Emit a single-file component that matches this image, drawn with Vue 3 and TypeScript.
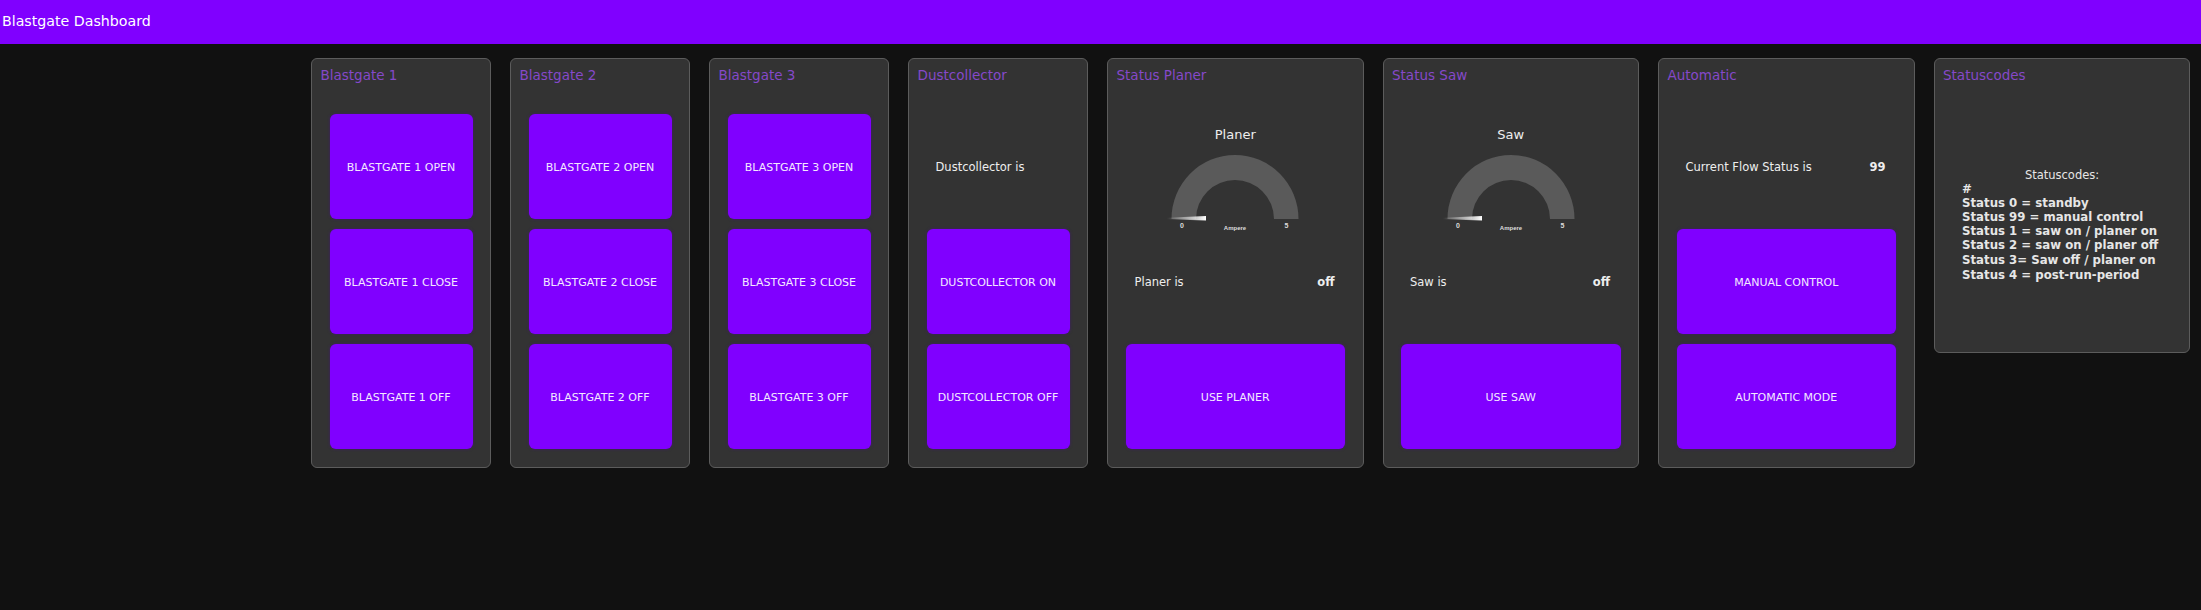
<script setup lang="ts">
interface Row { kind: 'button' | 'text' | 'gauge' | 'empty'; label?: string; value?: string }
interface Card { title: string; wide: boolean; rows: Row[] }

const b = (label: string): Row => ({ kind: 'button', label })
const t = (label: string, value = ''): Row => ({ kind: 'text', label, value })

const cards: Card[] = [
  { title: 'Blastgate 1', wide: false, rows: [b('BLASTGATE 1 OPEN'), b('BLASTGATE 1 CLOSE'), b('BLASTGATE 1 OFF')] },
  { title: 'Blastgate 2', wide: false, rows: [b('BLASTGATE 2 OPEN'), b('BLASTGATE 2 CLOSE'), b('BLASTGATE 2 OFF')] },
  { title: 'Blastgate 3', wide: false, rows: [b('BLASTGATE 3 OPEN'), b('BLASTGATE 3 CLOSE'), b('BLASTGATE 3 OFF')] },
  { title: 'Dustcollector', wide: false, rows: [t('Dustcollector is'), b('DUSTCOLLECTOR ON'), b('DUSTCOLLECTOR OFF')] },
  { title: 'Status Planer', wide: true, rows: [{ kind: 'gauge', label: 'Planer' }, t('Planer is', 'off'), b('USE PLANER')] },
  { title: 'Status Saw', wide: true, rows: [{ kind: 'gauge', label: 'Saw' }, t('Saw is', 'off'), b('USE SAW')] },
  { title: 'Automatic', wide: true, rows: [t('Current Flow Status is', '99'), b('MANUAL CONTROL'), b('AUTOMATIC MODE')] },
]

const codes = [
  '#',
  'Status 0 = standby',
  'Status 99 = manual control',
  'Status 1 = saw on / planer on',
  'Status 2 = saw on / planer off',
  'Status 3= Saw off / planer on',
  'Status 4 = post-run-period',
]
</script>

<template>
  <div class="page">
    <header class="bar">Blastgate Dashboard</header>
    <main class="board">
      <section v-for="card in cards" :key="card.title" class="card" :class="{ wide: card.wide }">
        <h2 class="title">{{ card.title }}</h2>
        <div class="rows">
          <template v-for="(row, i) in card.rows" :key="i">
            <button v-if="row.kind === 'button'" class="btn" type="button">{{ row.label }}</button>
            <div v-else-if="row.kind === 'text'" class="line">
              <span>{{ row.label }}</span>
              <strong>{{ row.value }}</strong>
            </div>
            <div v-else class="gauge">
              <div class="gauge-name">{{ row.label }}</div>
              <svg class="gauge-svg" width="140" height="80" viewBox="0 0 140 80">
                <defs>
                  <linearGradient :id="'needle' + card.title.length" x1="0" x2="1" y1="0" y2="0">
                    <stop offset="0" stop-color="#fff" stop-opacity="0" />
                    <stop offset="1" stop-color="#fff" />
                  </linearGradient>
                </defs>
                <path d="M6.5 65 A63.5 64 0 0 1 133.5 65 L109 65 A39 39 0 0 0 31 65 Z" fill="#5a5a5a" />
                <path d="M2 63.8 L41 62 L41 66.5 L2 65.2 Z" :fill="'url(#needle' + card.title.length + ')'" />
                <text x="17" y="74" class="tick">0</text>
                <text x="70" y="75.500" class="tick unit">Ampere</text>
                <text x="121.500" y="74" class="tick">5</text>
              </svg>
            </div>
          </template>
        </div>
      </section>
      <section class="card wide codes">
        <h2 class="title">Statuscodes</h2>
        <div class="codes-body">
          <div class="codes-head">Statuscodes:</div>
          <div v-for="code in codes" :key="code" class="code">{{ code }}</div>
        </div>
      </section>
    </main>
  </div>
</template>

<style>
html, body { margin: 0; background: #111; }
</style>

<style scoped>
.page {
  width: 2201px;
  height: 610px;
  background: #111;
  color: #eee;
  font-family: "DejaVu Sans", Verdana, sans-serif;
  overflow: hidden;
}
.bar {
  height: 44px;
  line-height: 43px;
  padding-left: 2px;
  background: #8000ff;
  color: #fff;
  font-size: 14.2px;
}
.board {
  display: flex;
  align-items: flex-start;
  gap: 19px;
  padding: 14px 0 0 311px;
}
.card {
  box-sizing: border-box;
  width: 180px;
  height: 410px;
  flex: none;
  background: #333;
  border: 1px solid #5c5c5c;
  border-radius: 6px;
}
.card.wide { width: 256.5px; }
.card.codes { height: 295px; }
.title {
  height: 55px;
  margin: 0;
  padding: 7.5px 0 0 8.5px;
  box-sizing: border-box;
  font-size: 13.5px;
  line-height: 16px;
  font-weight: 400;
  color: #8549c9;
}
.rows {
  display: grid;
  grid-template-rows: repeat(3, 105px);
  row-gap: 10px;
  padding: 0 17.5px;
}
.btn {
  display: block;
  width: 100%;
  padding: 2px 0 0;
  border: none;
  border-radius: 6px;
  background: #8000ff;
  color: #f4e8ff;
  font-family: inherit;
  font-size: 11px;
  box-shadow: 0 0 3px rgba(70, 20, 130, 0.8);
}
.line {
  display: flex;
  align-items: center;
  justify-content: space-between;
  padding: 0 10.5px 0 9px;
  font-size: 11.5px;
  color: #eee;
}
.line strong { font-weight: 700; }
.gauge {
  display: flex;
  flex-direction: column;
  align-items: center;
}
.gauge-name {
  margin-top: 13px;
  font-size: 13px;
  line-height: 16px;
  color: #eee;
}
.gauge-svg {
  margin-top: 11px;
  display: block;
  flex: none;
}
.tick {
  fill: #ddd;
  font-family: "Liberation Sans", Arial, sans-serif;
  font-size: 7px;
  font-weight: 700;
  text-anchor: middle;
}
.unit { font-size: 6px; }
.codes-body {
  padding: 54px 0 0 27.5px;
  font-size: 11.75px;
  line-height: 14.1px;
}
.codes-head {
  padding-right: 27px;
  text-align: center;
  color: #e6e6e6;
  font-size: 11.5px;
}
.code {
  font-weight: 700;
  color: #e6e6e6;
}
.code:last-child { margin-top: 1px; }
</style>
